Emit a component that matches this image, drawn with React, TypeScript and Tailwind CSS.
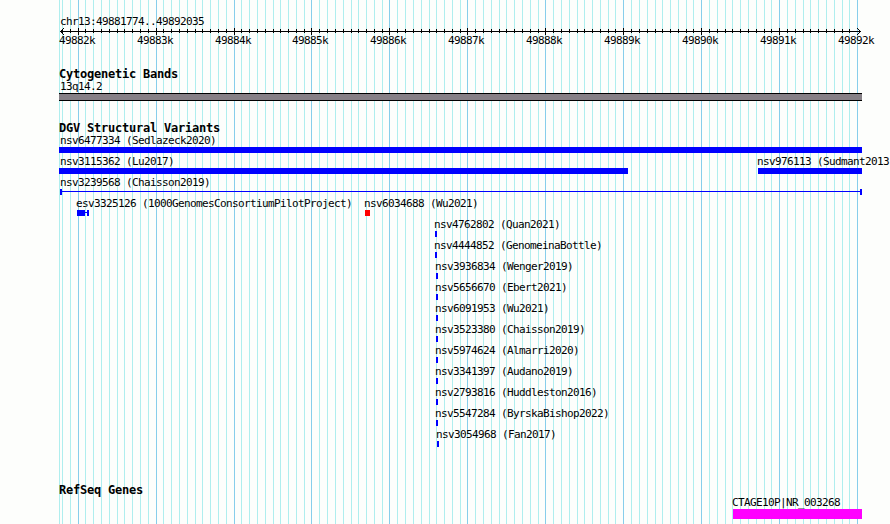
const HEIGHT = 524;

const majors = [78, 156, 234, 311, 389, 467, 545, 623, 701, 779, 857];

const minors = [
  62, 70,
  85, 93, 101, 109, 117, 124, 132, 140, 148,
  163, 171, 179, 187, 195, 202, 210, 218, 226,
  241, 249, 257, 265, 273, 280, 288, 296, 304,
  319, 327, 335, 343, 351, 358, 366, 374, 382,
  397, 405, 413, 421, 429, 436, 444, 452, 460,
  475, 483, 491, 499, 506, 514, 522, 530, 538,
  553, 561, 569, 577, 584, 592, 600, 608, 615,
  631, 639, 647, 655, 662, 670, 678, 686, 693,
  709, 717, 725, 732, 740, 748, 756, 764, 771,
  787, 795, 803, 810, 818, 826, 834, 842, 849,
];

type Shape = "bar" | "span" | "partial" | "red";

type Feature = {
  label: string;
  x: number;
  start: number;
  end: number;
  shape?: Shape;
};

const variants: Feature[][] = [
  [{ label: "nsv6477334 (Sedlazeck2020)", x: 60, start: 59, end: 862 }],
  [
    { label: "nsv3115362 (Lu2017)", x: 60, start: 59, end: 628 },
    { label: "nsv976113 (Sudmant2013)", x: 757, start: 758, end: 862 },
  ],
  [{ label: "nsv3239568 (Chaisson2019)", x: 60, start: 60, end: 862, shape: "span" }],
  [
    { label: "esv3325126 (1000GenomesConsortiumPilotProject)", x: 76, start: 77, end: 89, shape: "partial" },
    { label: "nsv6034688 (Wu2021)", x: 364, start: 365, end: 370, shape: "red" },
  ],
  [{ label: "nsv4762802 (Quan2021)", x: 434, start: 435, end: 437 }],
  [{ label: "nsv4444852 (GenomeinaBottle)", x: 434, start: 435, end: 437 }],
  [{ label: "nsv3936834 (Wenger2019)", x: 435, start: 436, end: 438 }],
  [{ label: "nsv5656670 (Ebert2021)", x: 435, start: 436, end: 438 }],
  [{ label: "nsv6091953 (Wu2021)", x: 435, start: 436, end: 438 }],
  [{ label: "nsv3523380 (Chaisson2019)", x: 435, start: 436, end: 438 }],
  [{ label: "nsv5974624 (Almarri2020)", x: 435, start: 436, end: 438 }],
  [{ label: "nsv3341397 (Audano2019)", x: 435, start: 436, end: 438 }],
  [{ label: "nsv2793816 (Huddleston2016)", x: 435, start: 436, end: 438 }],
  [{ label: "nsv5547284 (ByrskaBishop2022)", x: 435, start: 436, end: 438 }],
  [{ label: "nsv3054968 (Fan2017)", x: 436, start: 437, end: 439 }],
];

function Gridlines() {
  return (
    <svg
      className="absolute inset-0"
      width="890"
      height={HEIGHT}
      shapeRendering="crispEdges"
    >
      {[59, ...minors].map((x) => (
        <rect key={x} x={x} y="0" width="1" height={HEIGHT} fill="#afeeee" />
      ))}
      {majors.map((x) => (
        <rect key={x} x={x} y="0" width="1" height={HEIGHT} fill="#87ceeb" />
      ))}
    </svg>
  );
}

function Axis() {
  return (
    <svg className="block" width="890" height="7" shapeRendering="crispEdges">
      <rect x="60" y="3" width="801" height="1" />
      {minors.map((x) => (
        <rect key={x} x={x} y="1" width="1" height="4" />
      ))}
      {majors.slice(0, -1).map((x) => (
        <rect key={x} x={x} y="0" width="1" height="7" />
      ))}
      {[1, 2, 3].map((d) => (
        <g key={d}>
          <rect x={60 + d} y={3 - d} width="1" height="1" />
          <rect x={60 + d} y={3 + d} width="1" height="1" />
          <rect x={860 - d} y={3 - d} width="1" height="1" />
          <rect x={860 - d} y={3 + d} width="1" height="1" />
        </g>
      ))}
    </svg>
  );
}

function Label({ text, x }: { text: string; x: number }) {
  return (
    <span
      className="col-start-1 row-start-1 block h-3 leading-3 tracking-[-0.622px] whitespace-pre"
      style={{ marginLeft: x }}
    >
      {text}
    </span>
  );
}

function Title({ children }: { children: string }) {
  return (
    <h2 className="h-3 pl-[59px] text-[12px] leading-[10px] font-bold tracking-[-0.224px] whitespace-pre">
      {children}
    </h2>
  );
}

function Glyph({ start, end, shape = "bar" }: Feature) {
  const style = { marginLeft: start, width: end - start };

  if (shape === "span") {
    return (
      <div className="col-start-1 row-start-2 flex h-1.5" style={style}>
        <div className="w-0.5 bg-[#0000ff]" />
        <div className="mt-0.5 h-px flex-1 bg-[#0000ff]" />
        <div className="w-0.5 bg-[#0000ff]" />
      </div>
    );
  }
  if (shape === "partial") {
    return (
      <div className="col-start-1 row-start-2 flex h-1.5" style={style}>
        <div className="w-2 bg-[#0000ff]" />
        <div className="mt-0.5 h-px flex-1 bg-[#0000ff]" />
        <div className="w-0.5 bg-[#0000ff]" />
      </div>
    );
  }
  return (
    <div
      className={
        shape === "red"
          ? "col-start-1 row-start-2 h-1.5 bg-[#ff0000]"
          : "col-start-1 row-start-2 h-1.5 bg-[#0000ff]"
      }
      style={style}
    />
  );
}

export default function App() {
  return (
    <main className="relative h-[524px] w-[890px] overflow-hidden bg-[#fdfefc] font-['DejaVu_Sans_Mono',monospace] text-[11px] text-black">
      <Gridlines />
      <div className="relative flex flex-col">
        <header className="pt-4">
          <Label text="chr13:49881774..49892035" x={60} />
          <Axis />
          <div className="grid h-3">
            {majors.map((x, i) => (
              <Label key={x} text={`${49882 + i}k`} x={x - 19} />
            ))}
          </div>
        </header>

        <section className="pt-[22px]">
          <Title>Cytogenetic Bands</Title>
          <Label text="13q14.2" x={60} />
          <div className="ml-[59px] h-2 w-[803px] border-y border-black bg-[#868086]" />
        </section>

        <section className="pt-[22px]">
          <Title>DGV Structural Variants</Title>
          <div className="flex flex-col gap-[3px]">
            {variants.map((row) => (
              <div key={row[0].label} className="grid grid-cols-[890px] grid-rows-[12px_6px]">
                {row.map((f) => (
                  <Label key={f.label} text={f.label} x={f.x} />
                ))}
                {row.map((f) => (
                  <Glyph key={f.label} {...f} />
                ))}
              </div>
            ))}
          </div>
        </section>

        <section className="pt-[38px]">
          <Title>RefSeq Genes</Title>
          <Label text="CTAGE10P|NR_003268" x={732} />
          <div className="ml-[733px] h-2.5 w-[129px] bg-[#ff00ff]" />
        </section>
      </div>
    </main>
  );
}
